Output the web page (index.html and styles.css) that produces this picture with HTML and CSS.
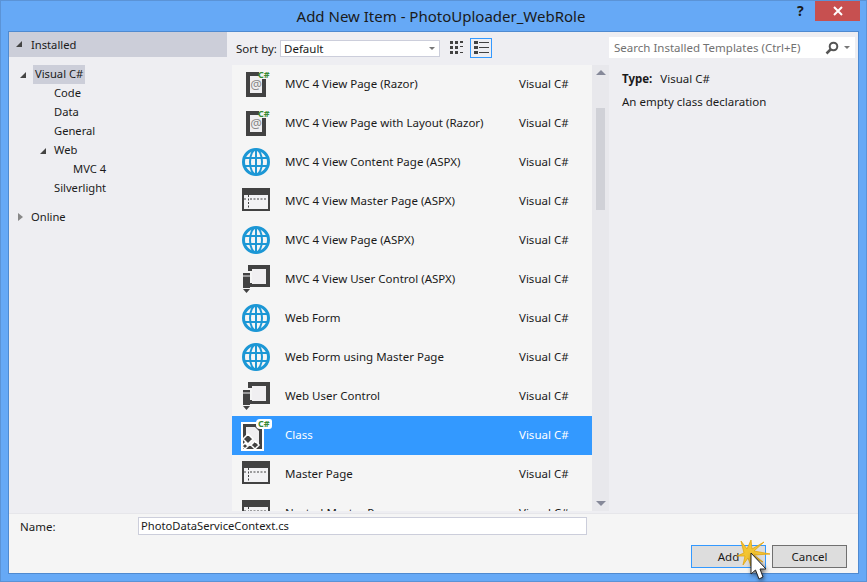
FILE: index.html
```html
<!DOCTYPE html>
<html lang="en">
<head>
<meta charset="utf-8">
<title>Add New Item</title>
<link rel="stylesheet" href="styles.css">
</head>
<body>
<svg class="defs" width="0" height="0" aria-hidden="true">
  <defs>
    <symbol id="i-razor" viewBox="0 0 32 32">
      <path d="M6 4h13v4h-9v17h12v-14h4v18h-20z" fill="#424242"/>
      <path d="M10 8h9v3h3v14h-12z" fill="#f0eff1"/>
      <text x="16" y="21" class="at">@</text>
      <text x="18" y="10" class="cs">C#</text>
    </symbol>
    <symbol id="i-globe" viewBox="0 0 32 32">
      <circle cx="16" cy="16" r="12.500" fill="none" stroke="#1c97d5" stroke-width="3"/>
      <ellipse cx="16" cy="16" rx="6" ry="12.500" fill="none" stroke="#1c97d5" stroke-width="2"/>
      <path d="M16 4v24M4 12h24M4 20h24" stroke="#1c97d5" stroke-width="2"/>
    </symbol>
    <symbol id="i-master" viewBox="0 0 32 32">
      <path d="M2 3h28v23h-28z" fill="#424242"/>
      <path d="M4 10h24v14h-24z" fill="#f2f2f4"/>
      <path d="M10 14h17M8.500 10v14M4 14h3" stroke="#424242" stroke-dasharray="2 1.500" fill="none"/>
    </symbol>
    <symbol id="i-control" viewBox="0 0 32 32">
      <path d="M8 2h22v22h-22v-4h4v1h14v-15h-14v2h-4z" fill="#424242"/>
      <path d="M12 6h14v15h-14z" fill="#f0eff1"/>
      <path d="M3 10h7v15h-7z" fill="#424242"/>
      <path d="M3 13h7" stroke="#f0eff1"/>
      <path d="M3 26h7l-3.500 4z" fill="#424242"/>
    </symbol>
    <symbol id="i-class" viewBox="0 0 32 32">
      <path d="M1 3h17l6 6v23h-23z" fill="#fff"/>
      <path d="M3 5h14l5 5v20h-19z" fill="#424242"/>
      <path d="M6 8h9l4 4v15h-13z" fill="#f0eff1"/>
      <path d="M3 20l5-5 5 5-5 5zM11 26l4-4 4 4-4 4zM2 27l3-3 3 3-3 3z" fill="#424242" stroke="#fff" stroke-width="1.500"/>
      <path d="M20 0h10a2 2 0 0 1 2 2v5a3 3 0 0 1-3 3h-9a4 4 0 0 1-4-4v-2a4 4 0 0 1 4-4z" fill="#fff"/>
      <text x="18" y="8" class="cs">C#</text>
    </symbol>
  </defs>
</svg>
<main class="window">
  <header class="titlebar">
    <span class="title-spacer"></span>
    <h1 class="title">Add New Item - PhotoUploader_WebRole</h1>
    <div class="title-actions">
      <span class="help">?</span>
      <span class="close">
        <svg width="10" height="10" viewBox="0 0 10 10"><path d="M1 1l8 8M9 1l-8 8" stroke="#fff" stroke-width="2"/></svg>
      </span>
    </div>
  </header>
  <div class="client">
    <div class="body">
      <nav class="tree">
        <div class="tree-head"><span class="tri open"></span>Installed</div>
        <ul class="tree-list">
          <li class="node lvl1"><span class="tri open"></span><span class="sel">Visual C#</span></li>
          <li class="node lvl2">Code</li>
          <li class="node lvl2">Data</li>
          <li class="node lvl2">General</li>
          <li class="node lvl2"><span class="tri open"></span>Web</li>
          <li class="node lvl3">MVC 4</li>
          <li class="node lvl2">Silverlight</li>
        </ul>
        <div class="tree-online"><span class="tri closed"></span>Online</div>
      </nav>
      <section class="center">
        <div class="toolbar">
          <label class="sort-label">Sort by:</label>
          <div class="select"><span>Default</span><span class="caret"></span></div>
          <span class="view-btn">
            <svg width="14" height="14" viewBox="0 0 14 14" fill="#424242"><path d="M0 0h3v3h-3zM5 0h3v3h-3zM10 0h3v2h-3zM0 5h3v3h-3zM5 5h3v3h-3zM10 5h3v1h-3zM0 10h3v3h-3zM5 10h3v3h-3zM10 11h3v1h-3z"/></svg>
          </span>
          <span class="view-btn active">
            <svg width="15" height="14" viewBox="0 0 15 14" fill="#424242"><path d="M0 0h4v3h-4zM0 5h4v3h-4zM0 10h4v3h-4zM5 1h10v1h-10zM5 6h10v1h-10zM5 11h10v1h-10z"/></svg>
          </span>
        </div>
        <div class="list-wrap">
          <ul class="list">
            <li class="row"><svg class="ico"><use href="#i-razor"/></svg><span class="name">MVC 4 View Page (Razor)</span><span class="lang">Visual C#</span></li>
            <li class="row"><svg class="ico"><use href="#i-razor"/></svg><span class="name">MVC 4 View Page with Layout (Razor)</span><span class="lang">Visual C#</span></li>
            <li class="row"><svg class="ico"><use href="#i-globe"/></svg><span class="name">MVC 4 View Content Page (ASPX)</span><span class="lang">Visual C#</span></li>
            <li class="row"><svg class="ico"><use href="#i-master"/></svg><span class="name">MVC 4 View Master Page (ASPX)</span><span class="lang">Visual C#</span></li>
            <li class="row"><svg class="ico"><use href="#i-globe"/></svg><span class="name">MVC 4 View Page (ASPX)</span><span class="lang">Visual C#</span></li>
            <li class="row"><svg class="ico"><use href="#i-control"/></svg><span class="name">MVC 4 View User Control (ASPX)</span><span class="lang">Visual C#</span></li>
            <li class="row"><svg class="ico"><use href="#i-globe"/></svg><span class="name">Web Form</span><span class="lang">Visual C#</span></li>
            <li class="row"><svg class="ico"><use href="#i-globe"/></svg><span class="name">Web Form using Master Page</span><span class="lang">Visual C#</span></li>
            <li class="row"><svg class="ico"><use href="#i-control"/></svg><span class="name">Web User Control</span><span class="lang">Visual C#</span></li>
            <li class="row selected"><svg class="ico"><use href="#i-class"/></svg><span class="name">Class</span><span class="lang">Visual C#</span></li>
            <li class="row"><svg class="ico"><use href="#i-master"/></svg><span class="name">Master Page</span><span class="lang">Visual C#</span></li>
            <li class="row"><svg class="ico"><use href="#i-master"/></svg><span class="name">Nested Master Page</span><span class="lang">Visual C#</span></li>
          </ul>
          <div class="scrollbar">
            <span class="arrow up"></span>
            <span class="thumb"></span>
            <span class="arrow down"></span>
          </div>
        </div>
      </section>
      <aside class="details">
        <div class="search">
          <span class="search-text">Search Installed Templates (Ctrl+E)</span>
          <svg width="14" height="14" viewBox="0 0 14 14"><circle cx="8.500" cy="5.500" r="3.800" fill="none" stroke="#555" stroke-width="2"/><path d="M6 8l-4.500 4.500" stroke="#555" stroke-width="2.500"/></svg>
          <span class="caret"></span>
        </div>
        <div class="info">
          <p class="type"><b>Type:</b>Visual C#</p>
          <p class="desc">An empty class declaration</p>
        </div>
      </aside>
    </div>
    <footer class="footer">
      <div class="name-row">
        <label class="name-label">Name:</label>
        <div class="name-input">PhotoDataServiceContext.cs</div>
      </div>
      <div class="buttons">
        <button class="btn primary">Add</button>
        <button class="btn">Cancel</button>
      </div>
    </footer>
  </div>
  <svg class="cursor" width="50" height="46" viewBox="0 0 50 46">
    <path class="star" d="M11 5L17 13 21 4 22 13 34 6 24 15 40 18 24 19 33 26 22 21 21 30 18 22 13 29 15 20 7 20 14 17z"/>
    <path class="arrow-ptr" d="M21 17V38L25.500 34 29 43 33 41 30 33H36z"/>
  </svg>
</main>
</body>
</html>
```

FILE: styles.css
```css
* { box-sizing: border-box; }
html, body { margin: 0; padding: 0; }
body {
  width: 867px;
  height: 582px;
  overflow: hidden;
  font-family: "Noto Sans", "Open Sans", sans-serif;
  font-size: 11.5px;
  color: #1a1a1a;
}
.defs { position: absolute; }
.at { font-size: 13px; fill: #8b8b8b; text-anchor: middle; }
.cs { font-size: 9px; font-weight: 700; fill: #388a34; }
ul { list-style: none; margin: 0; padding: 0; }
p { margin: 0; }

.window {
  position: relative;
  width: 867px;
  height: 582px;
  background: #66a9f6;
  border: 1px solid #5b93d6;
  padding: 0 7px 7px;
  display: flex;
  flex-direction: column;
}

.titlebar {
  height: 30px;
  display: grid;
  grid-template-columns: 1fr auto 1fr;
  margin-right: -7px;
}
.title {
  margin: 0;
  font-size: 15px;
  font-weight: 400;
  line-height: 30px;
  color: #1a1a1a;
  padding-left: 8px;
}
.title-actions {
  display: flex;
  justify-content: flex-end;
  align-items: flex-start;
}
.help {
  font-weight: 700;
  font-size: 14px;
  line-height: 20px;
  width: 14px;
  margin-right: 4px;
  color: #1a1a1a;
}
.close {
  width: 45px;
  height: 20px;
  background: #c75050;
  margin-right: 6px;
  display: flex;
  align-items: center;
  justify-content: center;
}

.client {
  flex: 1;
  min-height: 0;
  border: 1px solid #4f8ad0;
  background: #eeeef2;
  display: flex;
  flex-direction: column;
}
.body {
  height: 481px;
  display: grid;
  grid-template-columns: 218px 382px 1fr;
}

.tree { font-size: 11.2px; }
.tree-head {
  height: 25px;
  background: #ccced9;
  display: flex;
  align-items: center;
  padding-left: 22px;
  position: relative;
}
.tri { display: inline-block; position: absolute; }
.tri.open {
  width: 0;
  height: 0;
  border-style: solid;
  border-width: 0 0 6px 6px;
  border-color: transparent transparent #444 transparent;
}
.tree-head .tri { left: 7px; top: 9px; }
.tree-list { padding-top: 8px; }
.node {
  position: relative;
  height: 19px;
  line-height: 18px;
  white-space: nowrap;
}
.lvl1 { padding-left: 24px; }
.lvl1 .tri { left: 11px; top: 7px; }
.lvl2 { padding-left: 45px; }
.lvl2 .tri { left: 31px; top: 7px; }
.lvl3 { padding-left: 64px; }
.sel {
  display: inline-block;
  background: #ccced9;
  padding: 0 2px 1px;
}
.tree-online {
  position: relative;
  height: 19px;
  line-height: 18px;
  margin-top: 10px;
  padding-left: 22px;
}
.tri.closed {
  left: 9px;
  top: 5px;
  width: 0;
  height: 0;
  border-style: solid;
  border-width: 4px 0 4px 5px;
  border-color: transparent transparent transparent #888;
}

.center { display: flex; flex-direction: column; padding-left: 5px; }
.toolbar {
  height: 33px;
  display: flex;
  align-items: center;
  padding-left: 4px;
  padding-bottom: 1px;
}
.sort-label { width: 44px; }
.select {
  width: 160px;
  height: 17px;
  background: #fff;
  border: 1px solid #cccedb;
  display: flex;
  align-items: center;
  justify-content: space-between;
  padding: 0 4px 0 3px;
  margin-right: 6px;
}
.caret {
  width: 0;
  height: 0;
  border-style: solid;
  border-width: 3px 3px 0;
  border-color: #777 transparent transparent;
}
.view-btn {
  width: 21px;
  height: 20px;
  display: flex;
  align-items: center;
  justify-content: center;
  margin-right: 3px;
}
.view-btn.active { width: 22px; border: 1px solid #3399ff; }

.list-wrap {
  height: 446px;
  display: flex;
}
.list {
  width: 360px;
  overflow: hidden;
  background: #f5f5f5;
}
.row {
  height: 39px;
  display: flex;
  align-items: flex-start;
  padding-left: 8px;
  line-height: 37px;
}
.row.selected { background: #3399ff; color: #fff; }
.ico { width: 32px; height: 32px; flex: none; margin-top: 3px; overflow: visible; }
.name { width: 247px; padding-left: 13px; }
.scrollbar {
  width: 17px;
  background: #e8e8ec;
  display: flex;
  flex-direction: column;
  align-items: center;
  position: relative;
}
.arrow {
  width: 0;
  height: 0;
  border-style: solid;
}
.arrow.up {
  margin-top: 5px;
  border-width: 0 5px 5px;
  border-color: transparent transparent #868999;
}
.thumb {
  width: 9px;
  height: 102px;
  margin-top: 33px;
  background: #d0d1d7;
}
.arrow.down {
  margin-top: auto;
  margin-bottom: 5px;
  border-width: 5px 5px 0;
  border-color: #868999 transparent transparent;
}

.details { padding-top: 5px; }
.search {
  width: 246px;
  height: 21px;
  background: #fff;
  display: flex;
  align-items: center;
  padding: 0 5px;
}
.search-text { flex: 1; color: #717171; }
.search .caret { margin-left: 5px; }
.info { padding: 11px 0 0 13px; }
.type { line-height: 20px; margin-bottom: 3px; }
.type b { margin-right: 8px; font-weight: 700; }
.desc { line-height: 20px; }

.footer {
  flex: 1;
  background: #f5f5f5;
  border-top: 1px solid #e6e6ea;
  display: flex;
  flex-direction: column;
}
.name-row {
  display: flex;
  align-items: center;
  padding: 3px 0 0 11px;
}
.name-label { width: 118px; }
.name-input {
  width: 449px;
  height: 18px;
  line-height: 16px;
  background: #fff;
  border: 1px solid #cccedb;
  padding-left: 2px;
  font-size: 11.2px;
}
.buttons {
  display: flex;
  justify-content: flex-end;
  gap: 6px;
  padding: 10px 11px 0 0;
}
.btn {
  width: 75px;
  height: 23px;
  font: inherit;
  color: #1a1a1a;
  background: #dddddd;
  border: 1px solid #707070;
  padding: 0;
}
.btn.primary { border-color: #3399ff; }
.cursor {
  position: absolute;
  left: 729px;
  top: 535px;
}
.star { fill: #f3c532; stroke: #e3a50f; stroke-width: 0.8; }
.arrow-ptr {
  fill: #fff;
  stroke: #222;
  stroke-width: 1;
  stroke-linejoin: round;
  filter: drop-shadow(1px 2px 2px rgba(0, 0, 0, 0.55));
}
```
